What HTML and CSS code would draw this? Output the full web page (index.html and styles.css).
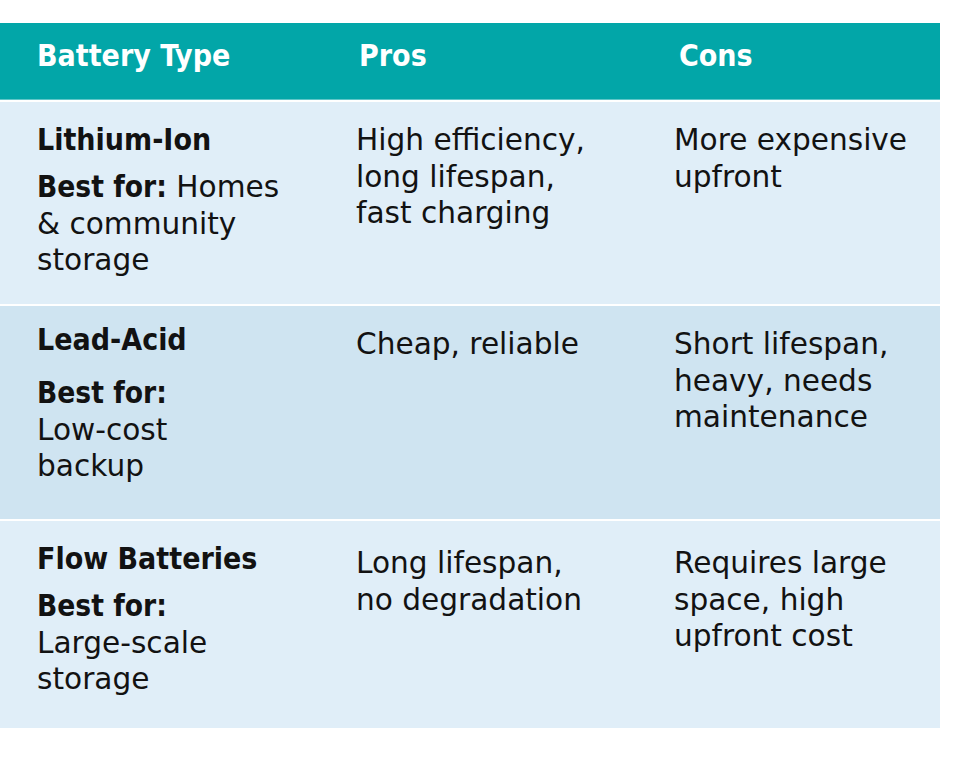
FILE: index.html
```html
<!DOCTYPE html>
<html lang="en">
<head>
<meta charset="utf-8">
<title>Battery Types</title>
<link rel="stylesheet" href="styles.css">
</head>
<body>
<div class="table">
  <div class="thead">
    <div class="th">Battery Type</div>
    <div class="th th-pros">Pros</div>
    <div class="th th-cons">Cons</div>
  </div>
  <div class="row row-light row-1">
    <div class="cell type">
      <div class="type-name">Lithium-Ion</div>
      <div class="best"><strong>Best for:</strong> Homes &amp; community storage</div>
    </div>
    <div class="cell">High efficiency, long lifespan, fast charging</div>
    <div class="cell">More expensive upfront</div>
  </div>
  <div class="row row-dark row-2">
    <div class="cell type">
      <div class="type-name">Lead-Acid</div>
      <div class="best"><strong>Best for:</strong> <span class="nowrap">Low-cost</span><br>backup</div>
    </div>
    <div class="cell">Cheap, reliable</div>
    <div class="cell">Short lifespan, heavy, needs maintenance</div>
  </div>
  <div class="row row-light row-3">
    <div class="cell type">
      <div class="type-name">Flow Batteries</div>
      <div class="best"><strong>Best for:</strong> <span class="nowrap">Large-scale</span> storage</div>
    </div>
    <div class="cell">Long lifespan, no degradation</div>
    <div class="cell">Requires large space, high upfront cost</div>
  </div>
</div>
</body>
</html>
```
FILE: styles.css
```css
* { box-sizing: border-box; }

body {
  margin: 0;
  background: #ffffff;
  font-family: "DejaVu Sans", sans-serif;
  color: #121212;
}

.table {
  width: 940px;
  margin-top: 23px;
  display: flex;
  flex-direction: column;
  gap: 2px;
}

.thead,
.row {
  display: grid;
  grid-template-columns: 319px 318px 303px;
}

.thead {
  background: #02a6a8;
  height: 77px;
  border-bottom: 1px solid #5fc6c8;
}

.th {
  color: #ffffff;
  font-weight: bold;
  font-stretch: condensed;
  font-size: 30px;
  line-height: 36px;
  padding: 15px 20px 0 37px;
}

.th-pros { padding-left: 40px; }
.th-cons { padding-left: 42px; }

.row-light { background: #e0eef8; }
.row-dark { background: #cfe4f1; }

.row-1 { height: 202px; }
.row-2 { height: 213px; }
.row-3 { height: 207px; }

.cell {
  font-size: 29.6px;
  line-height: 36.5px;
  padding: 20px 20px 0 37px;
}

.cell.type {
  padding-right: 30px;
}

.row .cell:nth-child(2) {
  padding-right: 40px;
}

.type-name {
  font-weight: bold;
  font-stretch: condensed;
  font-size: 30px;
  margin-bottom: 10.5px;
}

.best strong {
  font-weight: bold;
  font-stretch: condensed;
}

.nowrap {
  white-space: nowrap;
}

.row-2 .type-name {
  margin-top: -4px;
  margin-bottom: 16.5px;
}

.row-3 .cell:not(.type) {
  padding-top: 24px;
}
```
